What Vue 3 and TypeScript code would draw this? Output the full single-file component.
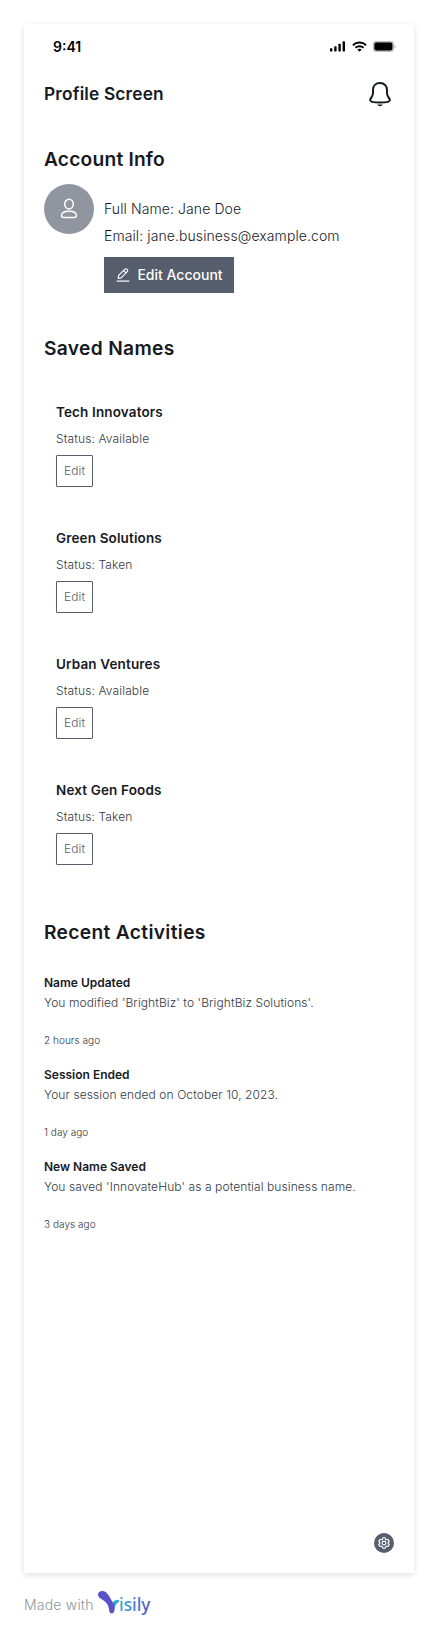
<script setup lang="ts">
interface SavedName {
  name: string
  status: string
}
interface Activity {
  title: string
  text: string
  time: string
}

const savedNames: SavedName[] = [
  { name: 'Tech Innovators', status: 'Available' },
  { name: 'Green Solutions', status: 'Taken' },
  { name: 'Urban Ventures', status: 'Available' },
  { name: 'Next Gen Foods', status: 'Taken' },
]

const activities: Activity[] = [
  { title: 'Name Updated', text: "You modified 'BrightBiz' to 'BrightBiz Solutions'.", time: '2 hours ago' },
  { title: 'Session Ended', text: 'Your session ended on October 10, 2023.', time: '1 day ago' },
  { title: 'New Name Saved', text: "You saved 'InnovateHub' as a potential business name.", time: '3 days ago' },
]
</script>

<template>
  <div class="page">
    <main class="screen">
      <div class="status-bar">
        <span class="clock">9:41</span>
        <div class="indicators">
          <svg class="signal" width="16" height="11" viewBox="0 0 16 11">
            <rect x="0" y="7.2" width="2.4" height="3.3" rx=".7" />
            <rect x="4.2" y="5.2" width="2.4" height="5.3" rx=".7" />
            <rect x="8.4" y="2.8" width="2.4" height="7.7" rx=".7" />
            <rect x="12.6" y=".3" width="2.4" height="10.2" rx=".7" />
          </svg>
          <svg class="wifi" width="15" height="11" viewBox="0 0 15 11" fill="none" stroke="#000" stroke-width="1.9">
            <path d="M.9 4.2a9.6 9.6 0 0 1 13.2 0" />
            <path d="M3.4 6.8a6 6 0 0 1 8.2 0" />
            <path d="M5.3 8.6a3.4 3.4 0 0 1 4.4 0L7.5 10.8z" fill="#000" stroke="none" />
          </svg>
          <svg class="battery" width="23" height="11" viewBox="0 0 23 11">
            <rect x="0" y="0" width="21" height="11" rx="3.2" fill="#bdbdbd" />
            <rect x="1.4" y="1.6" width="18" height="7.8" rx="1.8" />
            <path d="M21.6 3.8a2 2 0 0 1 0 3.4z" fill="#aaa" />
          </svg>
        </div>
      </div>

      <header class="top">
        <h1>Profile Screen</h1>
        <svg width="24" height="26" viewBox="0 0 24 26" fill="none" stroke="#171a1f" stroke-width="2">
          <path d="M12 2c-4.300 0-7 2.900-7 6.900v3.100c0 1.700-.4 2.700-1.400 4.100-.9 1.300-1.500 1.900-1.500 2.800 0 1.500 3.200 2.500 9.900 2.500s9.900-1 9.900-2.500c0-.9-.6-1.500-1.500-2.800-1-1.400-1.400-2.400-1.400-4.100V8.900c0-4-2.700-6.900-7-6.900z" stroke-linejoin="round" />
          <path d="M9.200 23.600h5.600c-.7 1.200-1.600 1.700-2.800 1.700s-2.100-.5-2.800-1.700z" fill="#171a1f" stroke="none" />
        </svg>
      </header>

      <section class="account">
        <h2>Account Info</h2>
        <div class="account-row">
          <div class="avatar">
            <svg width="18" height="22" viewBox="0 0 18 22" fill="none" stroke="#fff" stroke-width="1.5">
              <ellipse cx="9" cy="6.100" rx="4.300" ry="4.900" />
              <path d="M1.500 17.600c0-2.900 2.500-4.400 7.500-4.400s7.500 1.500 7.500 4.400c0 1.500-.9 2-2.300 2H3.800c-1.400 0-2.300-.5-2.300-2z" />
            </svg>
          </div>
          <div class="details">
            <p>Full Name: Jane Doe</p>
            <p>Email: jane.business@example.com</p>
            <button class="primary">
              <svg width="14" height="14" viewBox="0 0 14 14" fill="none" stroke="#fff" stroke-width="1.200">
                <path d="M2.200 10.400l.5-3L8.900 1.200a1.400 1.400 0 0 1 2 0l.4.4a1.400 1.400 0 0 1 0 2L5.100 9.800zM7.700 2.600l2.200 2.200" stroke-linejoin="round" />
                <path d="M.6 13.100h12.800" />
              </svg>
              <span>Edit Account</span>
            </button>
          </div>
        </div>
      </section>

      <section class="saved">
        <h2>Saved Names</h2>
        <ul>
          <li v-for="item in savedNames" :key="item.name">
            <h3>{{ item.name }}</h3>
            <p>Status: {{ item.status }}</p>
            <button class="outline">Edit</button>
          </li>
        </ul>
      </section>

      <section class="recent">
        <h2>Recent Activities</h2>
        <ul>
          <li v-for="activity in activities" :key="activity.title">
            <h4>{{ activity.title }}</h4>
            <p>{{ activity.text }}</p>
            <time>{{ activity.time }}</time>
          </li>
        </ul>
      </section>

      <div class="settings">
        <svg width="12" height="12" viewBox="0 0 12 12" fill="none" stroke="#fff" stroke-width="1.100">
          <path d="M4.800.8h2.400l.4 1.500 1 .6 1.500-.5 1.200 2.100L10.200 5.500v1l1.100 1-1.200 2.100-1.500-.5-1 .6-.4 1.500H4.800l-.4-1.500-1-.6-1.500.5L.7 7.500l1.100-1v-1L.7 4.500l1.200-2.100 1.500.5 1-.6z" stroke-linejoin="round" />
          <circle cx="6" cy="6" r="1.900" />
        </svg>
      </div>
    </main>

    <footer>
      <span>Made with</span>
      <svg width="56" height="28" viewBox="0 0 56 28">
        <defs>
          <linearGradient id="word" x1="22" y1="0" x2="54" y2="0" gradientUnits="userSpaceOnUse">
            <stop offset="0" stop-color="#36a9d8" />
            <stop offset=".5" stop-color="#4683d2" />
            <stop offset="1" stop-color="#5a50bd" />
          </linearGradient>
          <linearGradient id="arm" x1="13" y1="22" x2="22" y2="11" gradientUnits="userSpaceOnUse">
            <stop offset="0" stop-color="#4b62cf" />
            <stop offset="1" stop-color="#2fbfd9" />
          </linearGradient>
        </defs>
        <path d="M12.500 21.500c.2-5.500 3-10.500 8.700-10.800 1.300 0 1.200 2.200.1 2.700-3.300 1.300-3.500 6-4.500 9.200z" fill="url(#arm)" />
        <path d="M1 5.600C1 3 3.200 1.800 5.600 2c4.400.4 6.500 5.200 8.800 9 1.400 2.400 2.400 5 3 8 .5 2.600-.6 5.400-2.600 5.400-2.300 0-2.500-2.800-3.100-5.500-.8-3.500-2.500-5.800-5.500-7.700C3.300 9.400 1 8.400 1 5.600z" fill="#5a52c7" />
        <text x="22" y="21.500" fill="url(#word)" textLength="31.500" lengthAdjust="spacingAndGlyphs">isily</text>
      </svg>
    </footer>
  </div>
</template>

<style>
body {
  background: #fff;
}
</style>

<style scoped>
.page {
  box-sizing: border-box;
  width: 438px;
  height: 1637px;
  padding: 24px 24px 0;
  font-family: Inter, 'Liberation Sans', sans-serif;
  color: #171a1f;
  overflow: hidden;
}
h1, h2, h3, h4, p, ul {
  margin: 0;
  padding: 0;
}
ul {
  list-style: none;
}
.screen {
  position: relative;
  box-sizing: border-box;
  height: 1549px;
  padding: 0 20px;
  background: #fff;
  box-shadow: 0 2px 6px rgba(23, 26, 31, 0.13);
}
.status-bar {
  display: flex;
  justify-content: space-between;
  align-items: center;
  height: 44px;
}
.clock {
  margin-left: 9px;
  font-size: 14px;
  font-weight: 600;
  color: #000;
}
.indicators {
  display: flex;
  align-items: center;
  margin-right: -2px;
}
.wifi {
  margin-left: 6px;
}
.battery {
  margin-left: 6px;
}
.top {
  display: flex;
  justify-content: space-between;
  align-items: center;
  height: 52px;
  padding-right: 2px;
}
h1 {
  font-size: 17.300px;
  line-height: 28px;
  font-weight: 600;
  letter-spacing: 0.17px;
}
.top svg {
  display: block;
}
h2 {
  font-size: 19.200px;
  line-height: 28px;
  font-weight: 600;
  letter-spacing: 0.33px;
}
.account {
  padding-top: 25px;
}
.account h2 {
  letter-spacing: 0.2px;
}
.account-row {
  display: flex;
  gap: 10px;
  margin-top: 11px;
}
.avatar {
  display: flex;
  align-items: center;
  justify-content: center;
  width: 50px;
  height: 50px;
  border-radius: 50%;
  background: #9095a0;
}
.details {
  padding-top: 14px;
  font-size: 14px;
  line-height: 22px;
  font-weight: 300;
  letter-spacing: 0.09px;
}
.details p + p {
  margin-top: 5px;
}
button {
  box-sizing: border-box;
  display: flex;
  align-items: center;
  justify-content: center;
  padding: 0;
  font-family: inherit;
}
.primary {
  gap: 7px;
  width: 130px;
  height: 36px;
  margin-top: 10px;
  padding-left: 1px;
  border: 0;
  background: #565d6d;
  color: #fff;
  font-size: 14px;
  font-weight: 500;
}
.primary span {
  padding-bottom: 2px;
}
.saved {
  margin-top: 41px;
}
.saved ul {
  margin-top: 39px;
  padding-left: 12px;
}
.saved li {
  height: 126px;
}
h3 {
  font-size: 13.500px;
  line-height: 22px;
  font-weight: 600;
  letter-spacing: 0.14px;
}
.saved p {
  margin-top: 6px;
  font-size: 12px;
  line-height: 20px;
  font-weight: 300;
  letter-spacing: 0.13px;
  color: #323842;
}
.outline {
  width: 37px;
  height: 32px;
  margin-top: 6px;
  padding-bottom: 2px;
  border: 1px solid #565d6d;
  border-radius: 1px;
  background: #fff;
  color: #565d6d;
  font-size: 12px;
  font-weight: 300;
  letter-spacing: 0.1px;
}
.recent {
  margin-top: 13px;
}
.recent ul {
  margin-top: 27px;
}
.recent li {
  height: 92px;
  font-size: 12px;
  line-height: 20px;
}
h4 {
  font-size: 12px;
  font-weight: 600;
}
.recent p {
  font-weight: 300;
  letter-spacing: 0.09px;
  color: #323842;
}
.recent time {
  display: block;
  margin-top: 19px;
  font-size: 10px;
  line-height: 16px;
  font-weight: 300;
  letter-spacing: 0.04px;
  color: #323842;
}
.settings {
  position: absolute;
  right: 20px;
  bottom: 20px;
  display: flex;
  align-items: center;
  justify-content: center;
  width: 20px;
  height: 20px;
  border-radius: 50%;
  background: #565d6d;
}
footer {
  display: flex;
  align-items: center;
  margin-top: 16px;
  height: 28px;
  color: #9095a0;
  font-size: 14px;
  font-weight: 300;
}
footer span {
  width: 73px;
  padding-top: 2px;
  white-space: nowrap;
  letter-spacing: 0.2px;
}
footer text {
  font-family: 'Noto Sans', 'Open Sans', sans-serif;
  font-size: 18px;
  font-weight: 500;
}
</style>
